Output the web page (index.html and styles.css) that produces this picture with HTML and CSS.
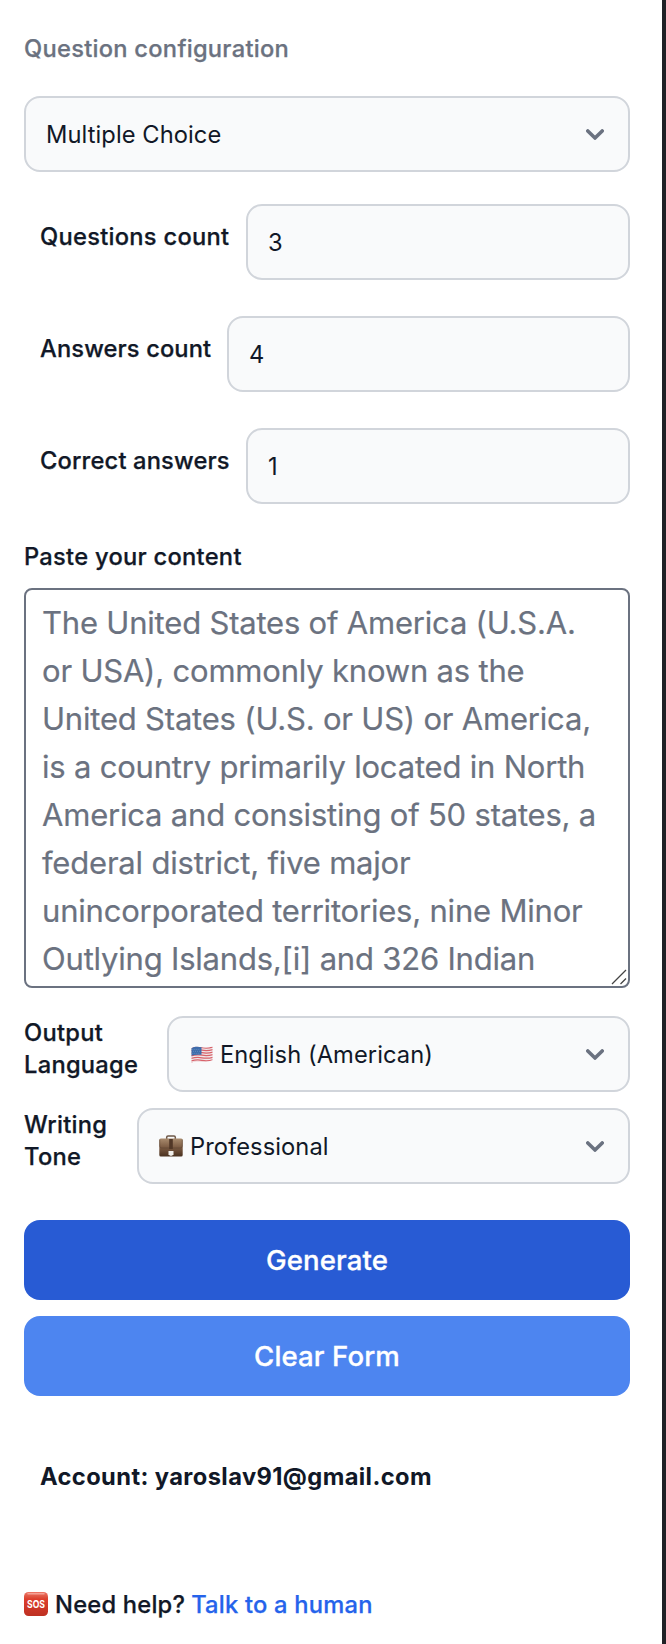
FILE: index.html
```html
<!DOCTYPE html>
<html lang="en">
<head>
<meta charset="utf-8">
<title>Question configuration</title>
<link rel="stylesheet" href="styles.css">
</head>
<body>
<main class="panel">
  <h2 class="heading">Question configuration</h2>

  <div class="select">
    <span class="value">Multiple Choice</span>
    <svg class="chevron" viewBox="0 0 10 6"><path d="m1 1 4 4 4-4"/></svg>
  </div>

  <div class="counts">
    <div class="count-row">
      <label class="label label-questions" for="questions">Questions count</label>
      <input class="input" id="questions" type="text" value="3">
    </div>
    <div class="count-row">
      <label class="label label-answers" for="answers">Answers count</label>
      <input class="input" id="answers" type="text" value="4">
    </div>
    <div class="count-row">
      <label class="label label-correct" for="correct">Correct answers</label>
      <input class="input" id="correct" type="text" value="1">
    </div>
  </div>

  <label class="label label-content" for="content">Paste your content</label>
  <div class="content-box">
    <textarea class="content" id="content">The United States of America (U.S.A.
or USA), commonly known as the
United States (U.S. or US) or America,
is a country primarily located in North
America and consisting of 50 states, a
federal district, five major
unincorporated territories, nine Minor
Outlying Islands,[i] and 326 Indian</textarea>
    <svg class="grip" viewBox="0 0 16 16"><path d="M1 15 15 1M9.500 15 15 9.500"/></svg>
  </div>

  <div class="option-row">
    <span class="label label-language">Output Language</span>
    <div class="select">
      <svg class="flag" viewBox="0 0 22 16" preserveAspectRatio="none">
        <clipPath id="flag-shape"><path d="M.5 2C4 .3 7 .6 11 1.200S18 1.300 21.500 .5V13.500C18 14.800 15 15 11 14.600S4 14.300 .5 15.500Z"/></clipPath>
        <g clip-path="url(#flag-shape)">
          <path fill="#f0e9ea" d="M0 0h22v16H0z"/>
          <path stroke="#d8616a" stroke-width="1.200" fill="none" d="M0 2Q6 .5 11 1.500T22 1M0 4.400Q6 2.900 11 3.900T22 3.400M0 6.800Q6 5.300 11 6.300T22 5.800M0 9.200Q6 7.700 11 8.700T22 8.200M0 11.600Q6 10.100 11 11.100T22 10.600M0 14Q6 12.500 11 13.500T22 13M0 16Q6 14.700 11 15.500T22 15"/>
          <path fill="#3d6cab" d="M0 0h10.500v8.300Q5 7.700 0 9.200z"/>
          <path stroke="#87a7d0" stroke-width=".7" stroke-dasharray=".7 1.300" d="M1.500 3.200h8M2 5h8M1.500 6.900h8"/>
        </g>
      </svg>
      <span class="value">English (American)</span>
      <svg class="chevron" viewBox="0 0 10 6"><path d="m1 1 4 4 4-4"/></svg>
    </div>
  </div>

  <div class="option-row">
    <span class="label label-tone">Writing Tone</span>
    <div class="select">
      <svg class="briefcase" viewBox="0 0 24 22">
        <defs><linearGradient id="leather" x1="0" y1="0" x2="0" y2="1"><stop offset="0" stop-color="#a98b6e"/><stop offset=".5" stop-color="#7b5a42"/><stop offset="1" stop-color="#49301f"/></linearGradient></defs>
        <path fill="none" stroke="#6e5848" stroke-width="1.500" d="M7.700 4V2.300Q7.700 1 9 1h6q1.300 0 1.300 1.300V4"/>
        <rect x=".3" y="3.500" width="23.400" height="18" rx="1.500" fill="url(#leather)"/>
        <path fill="none" stroke="#5b4332" stroke-width=".6" d="M.7 4.500V11q0 2 2 2h18.600q2 0 2-2V4.500"/>
        <path fill="#513727" d="M10.200 4h3.600v10h-3.600z"/>
        <path fill="#f1efeb" d="M9.500 16h5v3.200L13 20.700h-2l-1.500-1.500z"/>
      </svg>
      <span class="value">Professional</span>
      <svg class="chevron" viewBox="0 0 10 6"><path d="m1 1 4 4 4-4"/></svg>
    </div>
  </div>

  <div class="actions">
    <button class="button button-primary" type="button">Generate</button>
    <button class="button button-light" type="button">Clear Form</button>
  </div>

  <p class="account">Account: yaroslav91@gmail.com</p>

  <p class="help">
    <svg class="sos" viewBox="0 0 24 24">
      <defs><linearGradient id="sos-red" x1="0" y1="0" x2="0" y2="1"><stop offset="0" stop-color="#ee7565"/><stop offset=".22" stop-color="#dd4f3c"/><stop offset=".3" stop-color="#de3d2c"/><stop offset="1" stop-color="#bd3022"/></linearGradient></defs>
      <rect width="24" height="24" rx="4.500" fill="url(#sos-red)"/>
      <path d="M4 1.800h16" stroke="#f3a195" stroke-width="1.500" stroke-linecap="round"/>
      <text class="sos-text" x="12" y="16" text-anchor="middle" textLength="18" lengthAdjust="spacingAndGlyphs">SOS</text>
    </svg>
    <span class="help-text">Need help?</span>
    <a class="link">Talk to a human</a>
  </p>
</main>
</body>
</html>
```
FILE: styles.css
```css
* { box-sizing: border-box; }

body {
  margin: 0;
  background: #fff;
  color: #111827;
  font-family: Inter, "Liberation Sans", sans-serif;
  font-size: 23.700px;
  line-height: 32px;
}

.panel {
  height: 1644px;
  padding: 33px 32px 0 24px;
  border-right: 4px solid #202126;
  display: flex;
  flex-direction: column;
  overflow: hidden;
}

.heading {
  margin: 0 0 31px;
  color: #6b7280;
  font-size: 23.700px;
  font-weight: 500;
  letter-spacing: .26px;
  -webkit-text-stroke: .25px currentColor;
}

.select,
.input {
  height: 76px;
  border: 2px solid #d1d5db;
  border-radius: 16px;
  background: #f9fafb;
  color: #111827;
}

.select {
  display: flex;
  align-items: center;
  padding: 0 24px 0 20px;
  white-space: nowrap;
}

.value {
  padding-top: 2px;
  letter-spacing: .07px;
}

.chevron {
  width: 18px;
  height: 11px;
  margin-left: auto;
  fill: none;
  stroke: #6b7280;
  stroke-width: 2;
  stroke-linecap: round;
  stroke-linejoin: round;
}

.counts {
  display: flex;
  flex-direction: column;
  gap: 36px;
  margin: 32px 0 37px;
}

.count-row {
  display: flex;
  padding-left: 16px;
}

.input {
  flex: 1;
  min-width: 0;
  padding: 0 20px;
  font: inherit;
}

.label {
  font-weight: 500;
  letter-spacing: .27px;
  -webkit-text-stroke: .25px currentColor;
}

.label-questions,
.label-answers,
.label-correct {
  flex: none;
  width: 206px;
  padding-top: 17px;
  white-space: nowrap;
}

.label-answers {
  width: 187px;
  letter-spacing: .12px;
}

.label-correct { letter-spacing: .16px; }

.label-content { margin-bottom: 15px; }

.content-box {
  position: relative;
  height: 400px;
  margin-bottom: 28px;
}

.content {
  display: block;
  width: 100%;
  height: 400px;
  padding: 9px 16px 0;
  border: 2px solid #6b7280;
  border-radius: 8px;
  background: #fff;
  color: #6b7280;
  font: 400 31px/48px Inter, "Liberation Sans", sans-serif;
  letter-spacing: -.2px;
  -webkit-text-stroke: .2px currentColor;
  white-space: pre;
  resize: none;
  overflow: hidden;
}

.grip {
  position: absolute;
  right: 3px;
  bottom: 3px;
  width: 16px;
  height: 16px;
  fill: none;
  stroke: #444;
  stroke-width: 1.300;
}

.option-row {
  display: flex;
  height: 76px;
  margin-bottom: 16px;
}

.option-row .select { flex: 1; }

.label-language,
.label-tone {
  width: 143px;
  padding-top: 1px;
}

.label-tone { width: 113px; }

.flag {
  width: 22px;
  height: 17px;
  margin: 0 7px 0 2px;
}

.briefcase {
  width: 24px;
  height: 22px;
  margin-right: 7px;
}

.actions {
  display: flex;
  flex-direction: column;
  gap: 16px;
  margin-top: 20px;
}

.button {
  height: 80px;
  padding: 0 0 1px;
  border: 0;
  border-radius: 16px;
  color: #fff;
  font: 500 27.600px/40px Inter, "Liberation Sans", sans-serif;
  letter-spacing: .1px;
  -webkit-text-stroke: .3px currentColor;
}

.button-primary { background: #285bd4; }
.button-light { background: #4d85f0; }

.account {
  margin: 65px 0 95px 16px;
  font-weight: 700;
  letter-spacing: .39px;
}

.help {
  display: flex;
  align-items: center;
  margin: 0;
  padding-top: 1px;
  font-weight: 500;
  letter-spacing: .22px;
  -webkit-text-stroke: .25px currentColor;
}

.sos {
  width: 24px;
  height: 24px;
  margin: -3px 7px 0 0;
  -webkit-text-stroke: 0;
}

.sos-text {
  fill: #fff;
  font: 700 10.500px Inter, sans-serif;
  letter-spacing: 0;
}

.help-text { margin-right: 6px; }

.link { color: #2563eb; }
```
